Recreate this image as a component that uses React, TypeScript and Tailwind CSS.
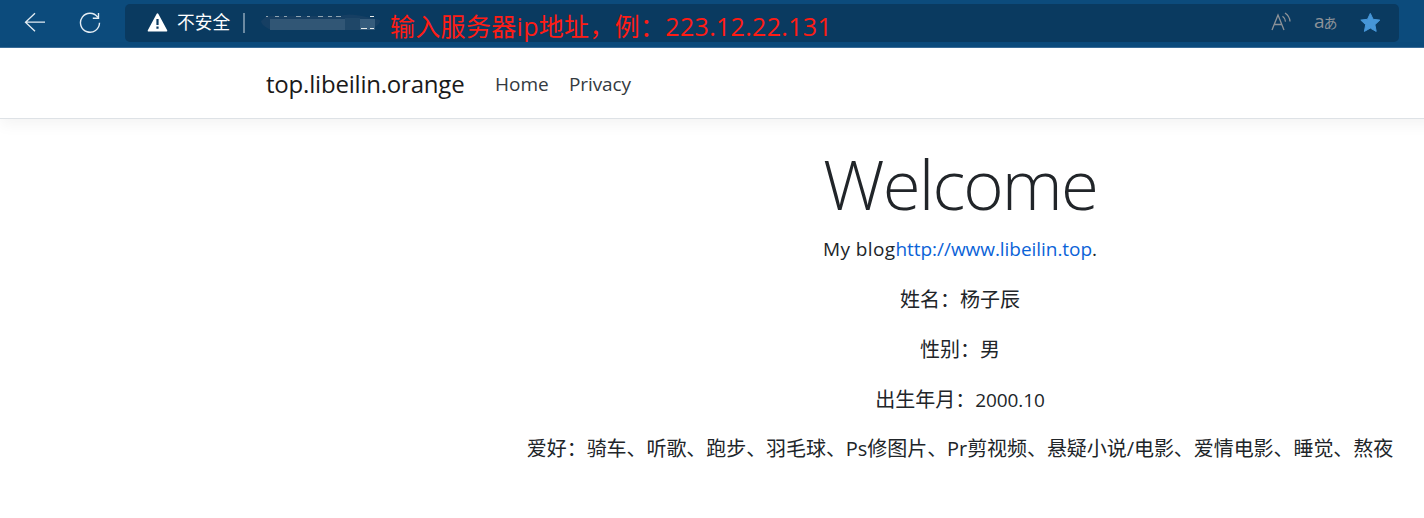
import React from "react";

const hobbies = "爱好：骑车、听歌、跑步、羽毛球、Ps修图片、Pr剪视频、悬疑小说/电影、爱情电影、睡觉、熬夜";

function BrowserBar() {
  return (
    <header className="flex h-12 w-[1424px] items-start border-b border-[#3a6d99] bg-[#0c4b7c] pt-1">
      <svg className="ml-[24px] mt-[8px] h-[21px] w-[22px] shrink-0" viewBox="0 0 22 21" fill="none" stroke="#e4edf4" strokeWidth="1.3">
        <path d="M21 10.2H1.5M11 1.2L1.5 10.2L11 19.3" />
      </svg>
      <svg className="ml-[33px] mt-[8px] h-[22px] w-[22px] shrink-0" viewBox="0 0 22 22" fill="none" stroke="#e4edf4" strokeWidth="1.4">
        <path d="M18.7 5.2A9.5 9.5 0 1 0 20.5 10.8M19.5 1V6.2H13.8" />
      </svg>
      <div className="ml-[24px] flex h-[38px] w-[1274px] items-start rounded-[5px] bg-[#0a3a60]">
        <svg className="ml-[22px] mt-[9px] h-[19px] w-[21px] shrink-0" viewBox="0 0 21 19">
          <path d="M10.5 1.3L19.4 17.7H1.6Z" fill="#fff" stroke="#fff" strokeWidth="1.8" strokeLinejoin="round" />
          <path d="M9.4 6h2.2v6H9.4zM9.4 13.6h2.2v2.1H9.4z" fill="#0a3a60" />
        </svg>
        <span className="ml-[9px] mt-[4px] w-[54px] whitespace-nowrap font-['Noto_Sans_CJK_SC',sans-serif] text-[17.7px] leading-[26px] text-white">不安全</span>
        <span className="ml-[12px] mt-[9px] h-[20px] w-[2px] bg-[#6c8aa2]" />
        <svg className="ml-[16px] mt-[9px] h-[20px] w-[122px] shrink-0" viewBox="0 0 122 20">
          <path d="M6 3H78Q88 0 101 3L119 7Q120 11 112 15L96 16H8Q0 12 0 8Z" fill="#163f63" />
          <path d="M9 6H84V17H9z" fill="#315675" />
          <path d="M84 5H99V17H84z" fill="#1f4768" />
          <path d="M99 6H114V17H99z" fill="#365c7c" />
          <path d="M5 3.5h2M14 3.5h4M23 3.5h3M35 3.5h5M46 3.5h3M57 3.5h5M67 3.5h4M75 3.5h5" stroke="#8fa3b0" strokeWidth="1" />
          <path d="M109 3.5h4M100 15.5h6M109 15.5h4" stroke="#e8ecea" strokeWidth="1" />
        </svg>
        <span className="ml-[7px] w-[460px] whitespace-nowrap font-['Open_Sans','Noto_Sans_CJK_SC',sans-serif] text-[25px] leading-[45px] tracking-[0.31px] text-[#ff1c14]">输入服务器ip地址，例：223.12.22.131</span>
        <svg className="ml-auto mt-[8px] h-[21px] w-[21px] shrink-0" viewBox="0 0 21 21" fill="none" stroke="#8d9298" strokeWidth="1.3">
          <path d="M1 18L7 3L13 18M3.3 12.5H10.8M11.5 4.2Q14.2 6 14.5 9.6M14 1Q18.8 4.3 19 9.5" />
        </svg>
        <span className="ml-[22px] mt-[6px] w-[23px] whitespace-nowrap font-['Open_Sans','Noto_Sans_CJK_JP',sans-serif] text-[19px] leading-[22px] text-[#8d9298]">a<span className="-ml-px text-[14px]">あ</span></span>
        <svg className="ml-[23px] mr-[18px] mt-[8px] h-[21px] w-[21px] shrink-0" viewBox="0 0 21 21" fill="#4696d8" stroke="#4696d8" strokeWidth="1" strokeLinejoin="round">
          <path d="M10.3 1.4L13.1 7.3L19.8 8.1L14.9 12.7L16.2 19.4L10.3 16.1L4.4 19.4L5.7 12.7L.8 8.1L7.5 7.3Z" />
        </svg>
      </div>
    </header>
  );
}

export default function App() {
  return (
    <div className="h-[518px] w-[1424px] overflow-hidden bg-white font-['Open_Sans','Noto_Sans_CJK_SC',sans-serif] text-[19px] text-[#212529]">
      <BrowserBar />
      <div className="w-[1920px]">
        <nav className="flex h-[71px] items-center border-b border-[#dee2e6] pl-[266px] pt-[2px] shadow-[0_5px_15px_rgba(0,0,0,0.05)]">
          <a className="w-[199px] whitespace-nowrap text-[24px] tracking-[-0.2px] text-[#1a1a1a]">top.libeilin.orange</a>
          <a className="ml-[30px] w-[54px] whitespace-nowrap text-[#343a40]">Home</a>
          <a className="ml-[20px] whitespace-nowrap tracking-[-0.1px] text-[#343a40]">Privacy</a>
        </nav>
        <main className="flex flex-col items-center pt-[23px]">
          <h1 className="mb-[9px] whitespace-nowrap text-[69px] font-light leading-[83px] tracking-[-1.9px]">Welcome</h1>
          <p className="mb-[21px] whitespace-nowrap leading-[30px]"><span className="tracking-[0.4px]">My blog</span><a className="tracking-[-0.05px] text-[#0b63d8]">http://www.libeilin.top</a>.</p>
          <p className="mb-5 text-[20px] leading-[30px]">姓名：杨子辰</p>
          <p className="mb-5 text-[20px] leading-[30px]">性别：男</p>
          <p className="mb-[19px] text-[20px] leading-[30px]">出生年月：<span className="text-[19px] tracking-[-0.1px]">2000.10</span></p>
          <p className="whitespace-nowrap text-[20px] leading-[30px] tracking-[-0.06px]">{hobbies}</p>
        </main>
      </div>
    </div>
  );
}
